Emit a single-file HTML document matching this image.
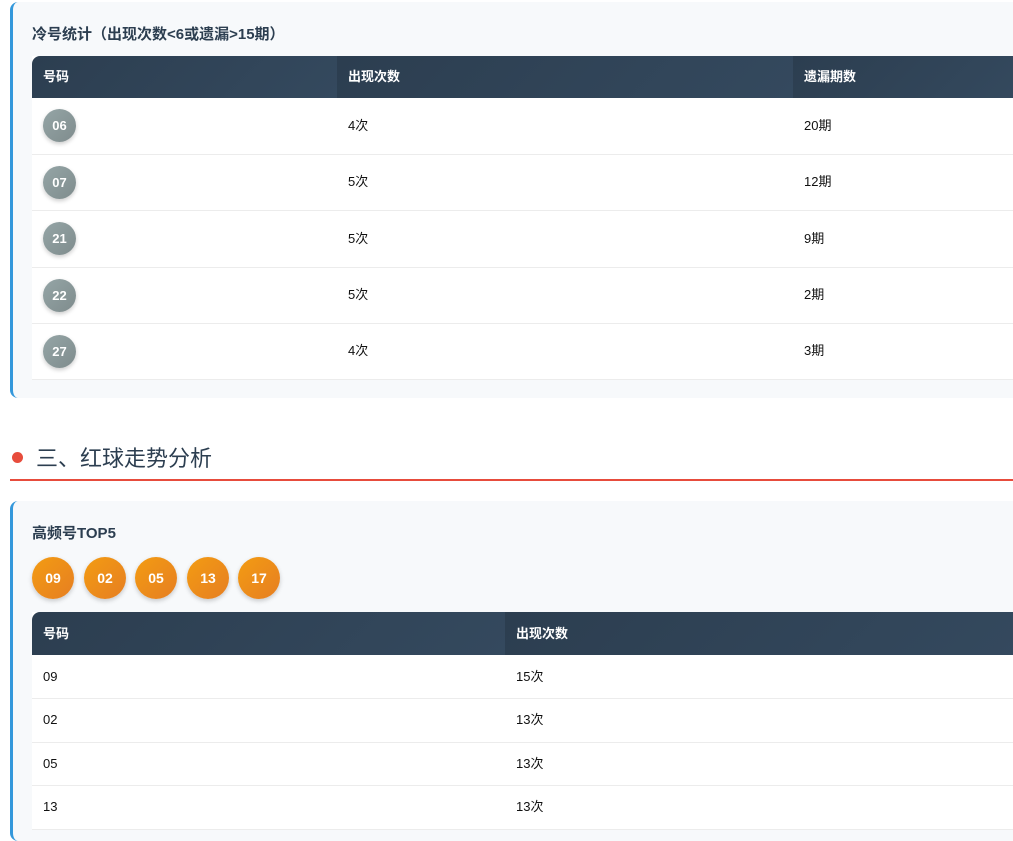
<!DOCTYPE html>
<html><head><meta charset="utf-8"><style>
*{box-sizing:border-box;margin:0;padding:0}
body{width:1013px;height:830px;overflow:hidden;background:#fff;font-family:"Liberation Sans","Noto Sans CJK SC",sans-serif;color:#111;position:relative}
.card{position:absolute;left:10px;width:1020px;background:#f7f9fb;border-left:3px solid #3498db;border-radius:8px}
.title{position:absolute;left:19px;font-size:15px;font-weight:bold;color:#2c3e50}
table{position:absolute;left:19px;width:990px;border-collapse:collapse;background:#fff;font-size:13px}
th{background:linear-gradient(135deg,#2c3e50,#34495e);color:#fff;text-align:left;font-weight:bold;padding:0 11px;vertical-align:middle;line-height:16px}
td{padding:0 11px;border-bottom:1px solid #ececec;vertical-align:middle;line-height:16px}
td span.t{display:inline-block;vertical-align:middle;line-height:16px}
.g{display:inline-block;width:33px;height:33px;border-radius:50%;background:linear-gradient(135deg,#95a5a6,#7f8c8d);color:#fff;font-weight:bold;font-size:13px;line-height:33px;text-align:center;box-shadow:0 2px 4px rgba(0,0,0,.2);vertical-align:middle}
.o{position:absolute;top:56px;width:42px;height:42px;border-radius:50%;background:linear-gradient(135deg,#f39c12,#e67e22);color:#fff;font-weight:bold;font-size:14px;line-height:42px;text-align:center;box-shadow:0 2px 5px rgba(0,0,0,.2)}
</style></head><body>
<div class="card" style="top:2px;height:396px">
<div class="title" style="top:21px">冷号统计（出现次数&lt;6或遗漏&gt;15期）</div>
<table style="top:54px">
<tr style="height:42px"><th style="width:305px;border-top-left-radius:8px">号码</th><th style="width:456px">出现次数</th><th>遗漏期数</th></tr>
<tr style="height:56px"><td><span class="g">06</span></td><td>4次</td><td>20期</td></tr>
<tr style="height:56px"><td><span class="g">07</span></td><td>5次</td><td>12期</td></tr>
<tr style="height:57px"><td><span class="g">21</span></td><td>5次</td><td>9期</td></tr>
<tr style="height:56px"><td><span class="g">22</span></td><td>5次</td><td>2期</td></tr>
<tr style="height:56px"><td><span class="g">27</span></td><td>4次</td><td>3期</td></tr>
</table>
</div>
<div style="position:absolute;left:12px;top:452px;width:11px;height:11px;border-radius:50%;background:#e74c3c"></div>
<div style="position:absolute;left:36px;top:441px;font-size:22px;color:#2c3e50">三、红球走势分析</div>
<div style="position:absolute;left:10px;top:479px;width:1003px;height:2px;background:#e74c3c"></div>
<div class="card" style="top:501px;height:340px">
<div class="title" style="top:21px">高频号TOP5</div>
<div class="o" style="left:19px">09</div>
<div class="o" style="left:71px">02</div>
<div class="o" style="left:122px">05</div>
<div class="o" style="left:174px">13</div>
<div class="o" style="left:225px">17</div>
<table style="top:111px">
<tr style="height:43px"><th style="width:473px;border-top-left-radius:8px">号码</th><th>出现次数</th></tr>
<tr style="height:43px"><td><span class="t">09</span></td><td><span class="t">15次</span></td></tr>
<tr style="height:44px"><td><span class="t">02</span></td><td><span class="t">13次</span></td></tr>
<tr style="height:43px"><td><span class="t">05</span></td><td><span class="t">13次</span></td></tr>
<tr style="height:44px"><td><span class="t">13</span></td><td><span class="t">13次</span></td></tr>
</table>
</div>
</body></html>
